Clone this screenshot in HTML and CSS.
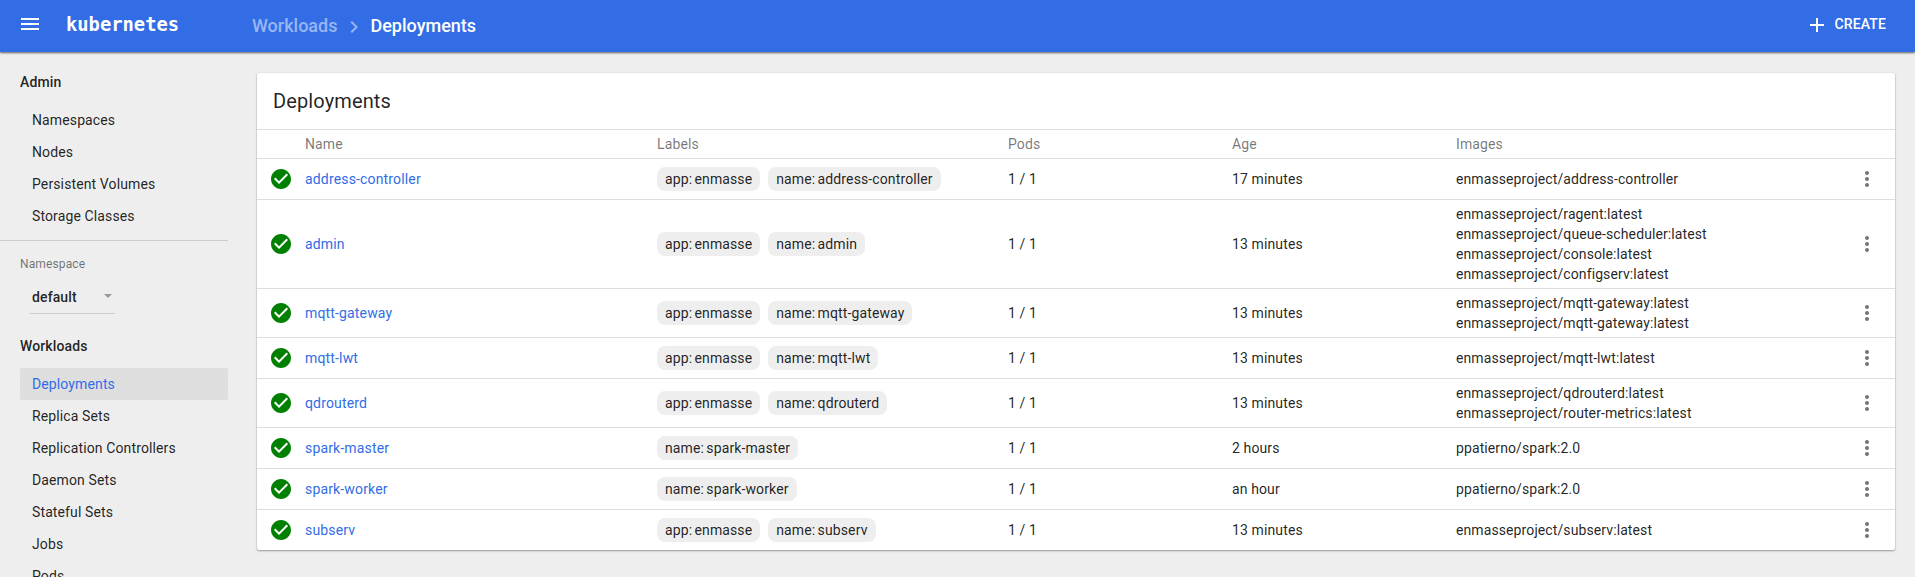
FILE: index.html
```html
<!DOCTYPE html>
<html lang="en">
<head>
<meta charset="utf-8">
<title>Deployments - Kubernetes Dashboard</title>
<link rel="stylesheet" href="styles.css">
</head>
<body>
<svg class="defs" width="0" height="0">
  <symbol id="check" viewBox="0 0 24 24"><path d="M12 2C6.48 2 2 6.48 2 12s4.48 10 10 10 10-4.480 10-10S17.520 2 12 2zm-2 15l-5-5 1.410-1.410L10 14.170l7.590-7.590L19 8l-9 9z"/></symbol>
  <symbol id="more" viewBox="0 0 24 24"><path d="M12 8c1.100 0 2-.9 2-2s-.9-2-2-2-2 .9-2 2 .9 2 2 2zm0 2c-1.100 0-2 .9-2 2s.9 2 2 2 2-.9 2-2-.9-2-2-2zm0 6c-1.100 0-2 .9-2 2s.9 2 2 2 2-.9 2-2-.9-2-2-2z"/></symbol>
</svg>
<header class="topbar">
  <svg class="menu" viewBox="0 0 24 24"><path d="M3 18h18v-2H3v2zm0-5h18v-2H3v2zm0-7v2h18V6H3z"/></svg>
  <span class="logo">kubernetes</span>
  <nav class="crumbs">
    <a class="crumb-parent">Workloads</a>
    <svg class="chevron" viewBox="0 0 24 24"><path d="M10 6L8.590 7.410 13.170 12l-4.580 4.590L10 18l6-6z"/></svg>
    <span>Deployments</span>
  </nav>
  <button class="create"><svg viewBox="0 0 24 24"><path d="M19 13h-6v6h-2v-6H5v-2h6V5h2v6h6v2z"/></svg><span>CREATE</span></button>
</header>
<div class="layout">
  <aside class="sidebar">
    <h3 class="group">Admin</h3>
    <a class="item">Namespaces</a>
    <a class="item">Nodes</a>
    <a class="item">Persistent Volumes</a>
    <a class="item">Storage Classes</a>
    <div class="namespace">
      <div class="ns-label">Namespace</div>
      <div class="select"><span>default</span><i class="caret"></i></div>
    </div>
    <h3 class="group workloads">Workloads</h3>
    <a class="item active">Deployments</a>
    <a class="item">Replica Sets</a>
    <a class="item">Replication Controllers</a>
    <a class="item">Daemon Sets</a>
    <a class="item">Stateful Sets</a>
    <a class="item">Jobs</a>
    <a class="item">Pods</a>
  </aside>
  <main class="card">
    <h2 class="title">Deployments</h2>
    <div class="row head"><span></span><span>Name</span><span>Labels</span><span>Pods</span><span>Age</span><span>Images</span></div>
    <div class="row"><svg class="ok"><use href="#check"/></svg><a class="link">address-controller</a><div class="chips"><span class="chip">app: enmasse</span><span class="chip">name: address-controller</span></div><span>1 / 1</span><span>17 minutes</span><div class="images"><div>enmasseproject/address-controller</div></div><svg class="more"><use href="#more"/></svg></div>
    <div class="row"><svg class="ok"><use href="#check"/></svg><a class="link">admin</a><div class="chips"><span class="chip">app: enmasse</span><span class="chip">name: admin</span></div><span>1 / 1</span><span>13 minutes</span><div class="images"><div>enmasseproject/ragent:latest</div><div>enmasseproject/queue-scheduler:latest</div><div>enmasseproject/console:latest</div><div>enmasseproject/configserv:latest</div></div><svg class="more"><use href="#more"/></svg></div>
    <div class="row"><svg class="ok"><use href="#check"/></svg><a class="link">mqtt-gateway</a><div class="chips"><span class="chip">app: enmasse</span><span class="chip">name: mqtt-gateway</span></div><span>1 / 1</span><span>13 minutes</span><div class="images"><div>enmasseproject/mqtt-gateway:latest</div><div>enmasseproject/mqtt-gateway:latest</div></div><svg class="more"><use href="#more"/></svg></div>
    <div class="row"><svg class="ok"><use href="#check"/></svg><a class="link">mqtt-lwt</a><div class="chips"><span class="chip">app: enmasse</span><span class="chip">name: mqtt-lwt</span></div><span>1 / 1</span><span>13 minutes</span><div class="images"><div>enmasseproject/mqtt-lwt:latest</div></div><svg class="more"><use href="#more"/></svg></div>
    <div class="row"><svg class="ok"><use href="#check"/></svg><a class="link">qdrouterd</a><div class="chips"><span class="chip">app: enmasse</span><span class="chip">name: qdrouterd</span></div><span>1 / 1</span><span>13 minutes</span><div class="images"><div>enmasseproject/qdrouterd:latest</div><div>enmasseproject/router-metrics:latest</div></div><svg class="more"><use href="#more"/></svg></div>
    <div class="row"><svg class="ok"><use href="#check"/></svg><a class="link">spark-master</a><div class="chips"><span class="chip">name: spark-master</span></div><span>1 / 1</span><span>2 hours</span><div class="images"><div>ppatierno/spark:2.0</div></div><svg class="more"><use href="#more"/></svg></div>
    <div class="row"><svg class="ok"><use href="#check"/></svg><a class="link">spark-worker</a><div class="chips"><span class="chip">name: spark-worker</span></div><span>1 / 1</span><span>an hour</span><div class="images"><div>ppatierno/spark:2.0</div></div><svg class="more"><use href="#more"/></svg></div>
    <div class="row"><svg class="ok"><use href="#check"/></svg><a class="link">subserv</a><div class="chips"><span class="chip">app: enmasse</span><span class="chip">name: subserv</span></div><span>1 / 1</span><span>13 minutes</span><div class="images"><div>enmasseproject/subserv:latest</div></div><svg class="more"><use href="#more"/></svg></div>
  </main>
</div>
</body>
</html>
```
FILE: styles.css
```css
* { box-sizing: border-box; }
body {
  margin: 0;
  height: 577px;
  overflow: hidden;
  display: flex;
  flex-direction: column;
  background: #eee;
  color: rgba(0, 0, 0, .87);
  font: 14px/20px Roboto, sans-serif;
  letter-spacing: .12px;
}
.defs { display: none; }
.topbar {
  flex: none;
  height: 52px;
  display: flex;
  align-items: center;
  padding: 0 16px 4px 18px;
  background: #326de6;
  color: #fff;
  box-shadow: 0 1px 2px rgba(0, 0, 0, .6);
}
.topbar svg { fill: currentColor; }
.menu { width: 24px; height: 24px; }
.logo {
  width: 186px;
  margin: 1px 0 0 24px;
  font: bold 18.8px/24px "DejaVu Sans Mono", monospace;
  letter-spacing: 0;
}
.crumbs {
  display: flex;
  align-items: center;
  padding-top: 4px;
  font-size: 18px;
  font-weight: 500;
  line-height: 24px;
  letter-spacing: 0;
}
.crumb-parent { color: rgba(255, 255, 255, .5); }
.chevron { width: 24px; height: 24px; margin: 2px 4px 0 5px; opacity: .5; }
.create {
  display: flex;
  align-items: center;
  gap: 5px;
  margin-left: auto;
  padding: 0 13px 0 0;
  border: 0;
  background: none;
  color: inherit;
  font: 500 14px/24px Roboto, sans-serif;
  letter-spacing: .14px;
}
.create svg { width: 24px; height: 24px; margin-top: 2px; }
.layout { display: flex; }
.sidebar {
  flex: none;
  width: 228px;
  padding-left: 20px;
}
.group {
  margin: 20px 0 12px;
  font-size: 14px;
  font-weight: 500;
  line-height: 20px;
}
.item {
  display: block;
  height: 32px;
  padding-left: 12px;
  line-height: 32px;
  border-radius: 2px;
}
.item.active { background: #dedede; color: #326de6; }
.namespace {
  height: 76px;
  margin: 8px 0 0 -20px;
  padding: 13px 0 0 20px;
  border-top: 1px solid #ccc;
}
.ns-label { font-size: 12px; color: rgba(0, 0, 0, .54); }
.select {
  display: flex;
  align-items: center;
  justify-content: space-between;
  width: 85px;
  height: 30px;
  margin: 10px 0 0 10px;
  padding: 0 2px 3px;
  border-bottom: 1px solid #ccc;
  font-weight: 500;
}
.caret {
  margin: 0 1px 3px 0;
  border: 4px solid transparent;
  border-top-color: #999;
  border-bottom: 0;
}
.card {
  width: 1638px;
  margin: 21px 0 0 29px;
  align-self: flex-start;
  background: #fff;
  border-radius: 2px;
  box-shadow: 0 0 1px rgba(0, 0, 0, .2), 0 1px 2px rgba(0, 0, 0, .35);
}
.title {
  margin: 0;
  padding: 16px 16px;
  font-size: 20px;
  font-weight: 400;
  line-height: 24px;
}
.row {
  display: grid;
  grid-template-columns: 34px 352px 351px 224px 224px 399px 24px;
  align-items: center;
  min-height: 41px;
  padding: 4px 0 4px 14px;
  border-top: 1px solid #ddd;
}
.row.head { min-height: 29px; color: rgba(0, 0, 0, .54); }
.link { color: #326de6; letter-spacing: .16px; }
.ok { width: 24px; height: 24px; margin-left: -2px; fill: #008000; }
.more { width: 24px; height: 24px; fill: #757575; }
.images { letter-spacing: .1px; }
.chips { display: flex; gap: 8px; }
.chip {
  height: 24px;
  padding: 0 8px;
  border-radius: 8px;
  background: #eee;
  line-height: 25px;
  word-spacing: -1.3px;
}
```
